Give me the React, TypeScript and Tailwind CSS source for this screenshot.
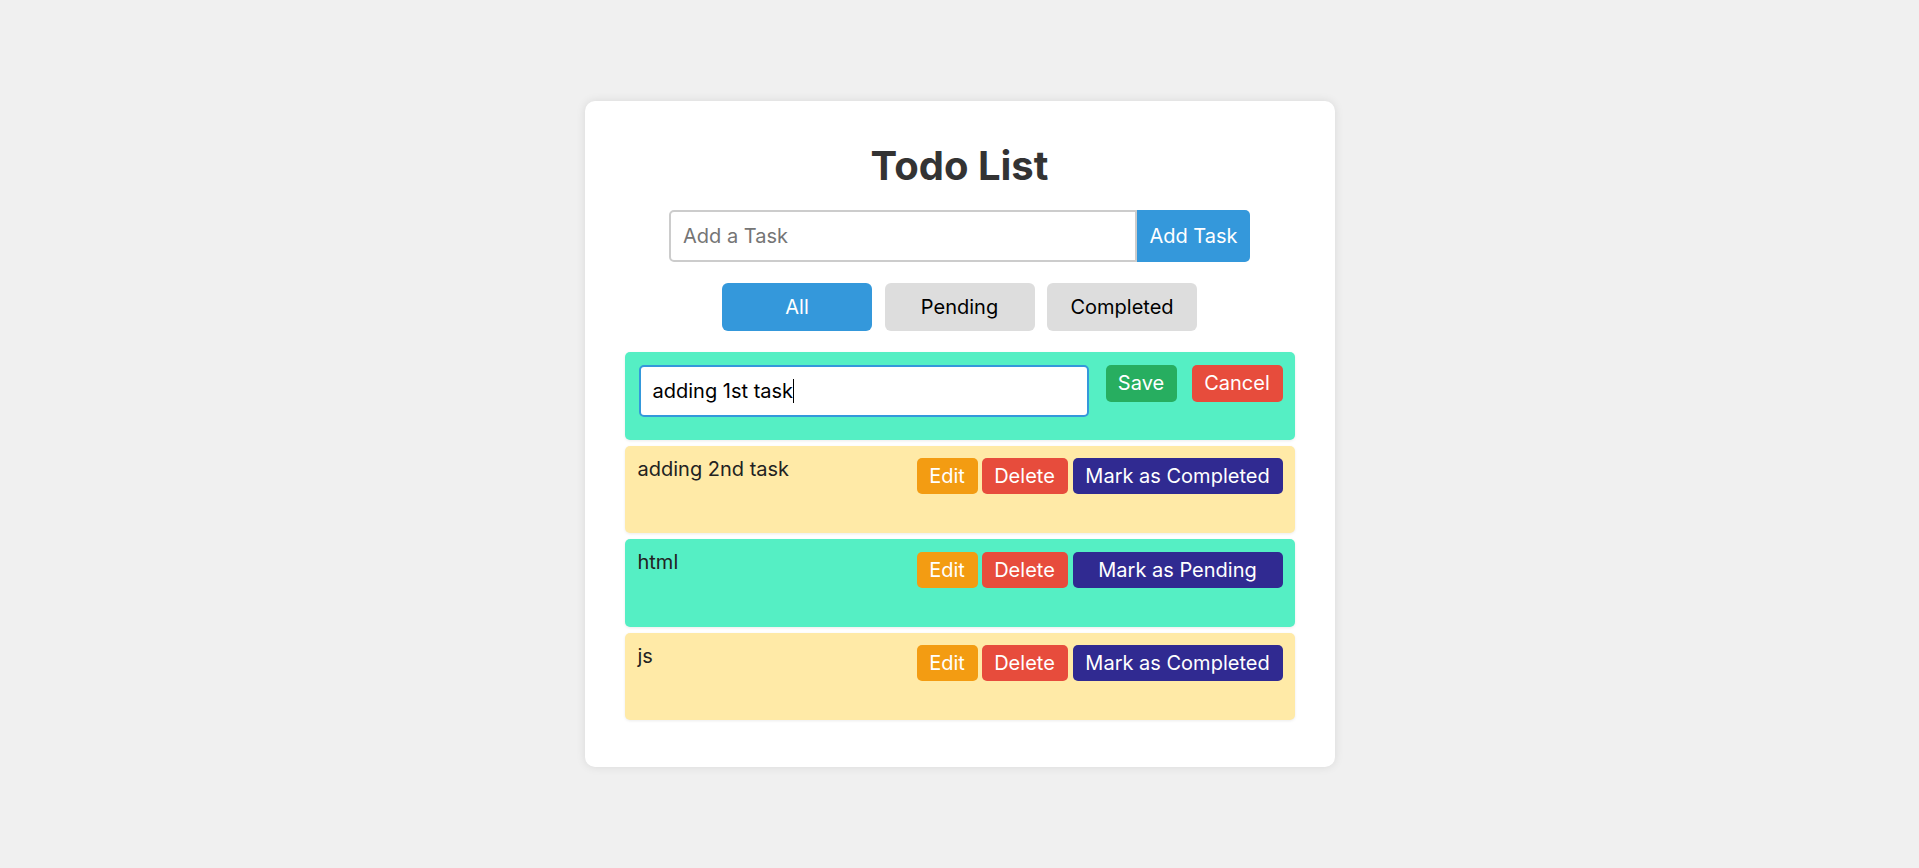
import React from "react";

type Item = { text: string; done: boolean };

const items: Item[] = [
  { text: "adding 2nd task", done: false },
  { text: "html", done: true },
  { text: "js", done: false },
];

export default function App() {
  return (
    <div className="min-h-screen w-full bg-[#f0f0f0] flex items-center justify-center font-['Inter','Noto_Sans',sans-serif]">
      <div className="w-[750px] bg-white rounded-[10px] shadow-[0_0_10px_rgba(0,0,0,0.1)] pt-[41px] pb-[47px] px-[40px] flex flex-col">
        <h1 className="text-center text-[40px] leading-[48px] font-bold text-[#333]">Todo List</h1>

        <div className="mt-[20px] flex justify-center">
          <input
            className="w-[468px] h-[52px] border-2 border-[#ccc] rounded-l-[5px] px-[12px] text-[20px] text-black placeholder:text-[#757575] outline-none bg-white"
            placeholder="Add a Task"
          />
          <button className="w-[113px] h-[52px] bg-[#3498db] text-white text-[20px] rounded-r-[5px]">Add Task</button>
        </div>

        <div className="mt-[21px] flex justify-center gap-[12.5px]">
          <button className="w-[150px] h-[48px] rounded-[6px] bg-[#3498db] text-white text-[20px]">All</button>
          <button className="w-[150px] h-[48px] rounded-[6px] bg-[#ddd] text-black text-[20px]">Pending</button>
          <button className="w-[150px] h-[48px] rounded-[6px] bg-[#ddd] text-black text-[20px]">Completed</button>
        </div>

        <div className="mt-[21px] flex flex-col gap-[6px]">
          <div className="h-[87.5px] bg-[#55efc4] rounded-[5px] shadow-[0_1px_3px_rgba(0,0,0,0.08)] pl-[14px] pr-[12px] pt-[12.5px] flex items-start">
            <div className="w-[450px] h-[52px] border-2 border-[#3498db] rounded-[5px] bg-white px-[12px] flex items-center text-[20px] text-black">
              <span>adding 1st task</span>
              <span className="inline-block w-[1px] h-[24px] bg-black"></span>
            </div>
            <button className="ml-[17px] w-[71px] h-[37px] bg-[#27ae60] text-white text-[20px] rounded-[5px]">Save</button>
            <button className="ml-[15px] w-[91px] h-[37px] bg-[#e74c3c] text-white text-[20px] rounded-[5px]">Cancel</button>
          </div>

          {items.map((it, i) => (
            <div
              key={i}
              className={
                "h-[87.5px] rounded-[5px] shadow-[0_1px_3px_rgba(0,0,0,0.08)] pl-[13px] pr-[12px] flex items-start " +
                (it.done ? "bg-[#55efc4]" : "bg-[#ffeaa7]")
              }
            >
              <span className="mt-[12px] leading-[23px] text-[20px] text-[#222]">{it.text}</span>
              <div className="ml-auto mt-[12.5px] flex">
                <button className="w-[61px] h-[36px] bg-[#f39c12] text-white text-[20px] rounded-[5px]">Edit</button>
                <button className="ml-[4px] w-[86px] h-[36px] bg-[#e74c3c] text-white text-[20px] rounded-[5px]">Delete</button>
                <button className="ml-[5px] w-[210px] h-[36px] bg-[#302a91] text-white text-[20px] rounded-[5px]">
                  {it.done ? "Mark as Pending" : "Mark as Completed"}
                </button>
              </div>
            </div>
          ))}
        </div>
      </div>
    </div>
  );
}
